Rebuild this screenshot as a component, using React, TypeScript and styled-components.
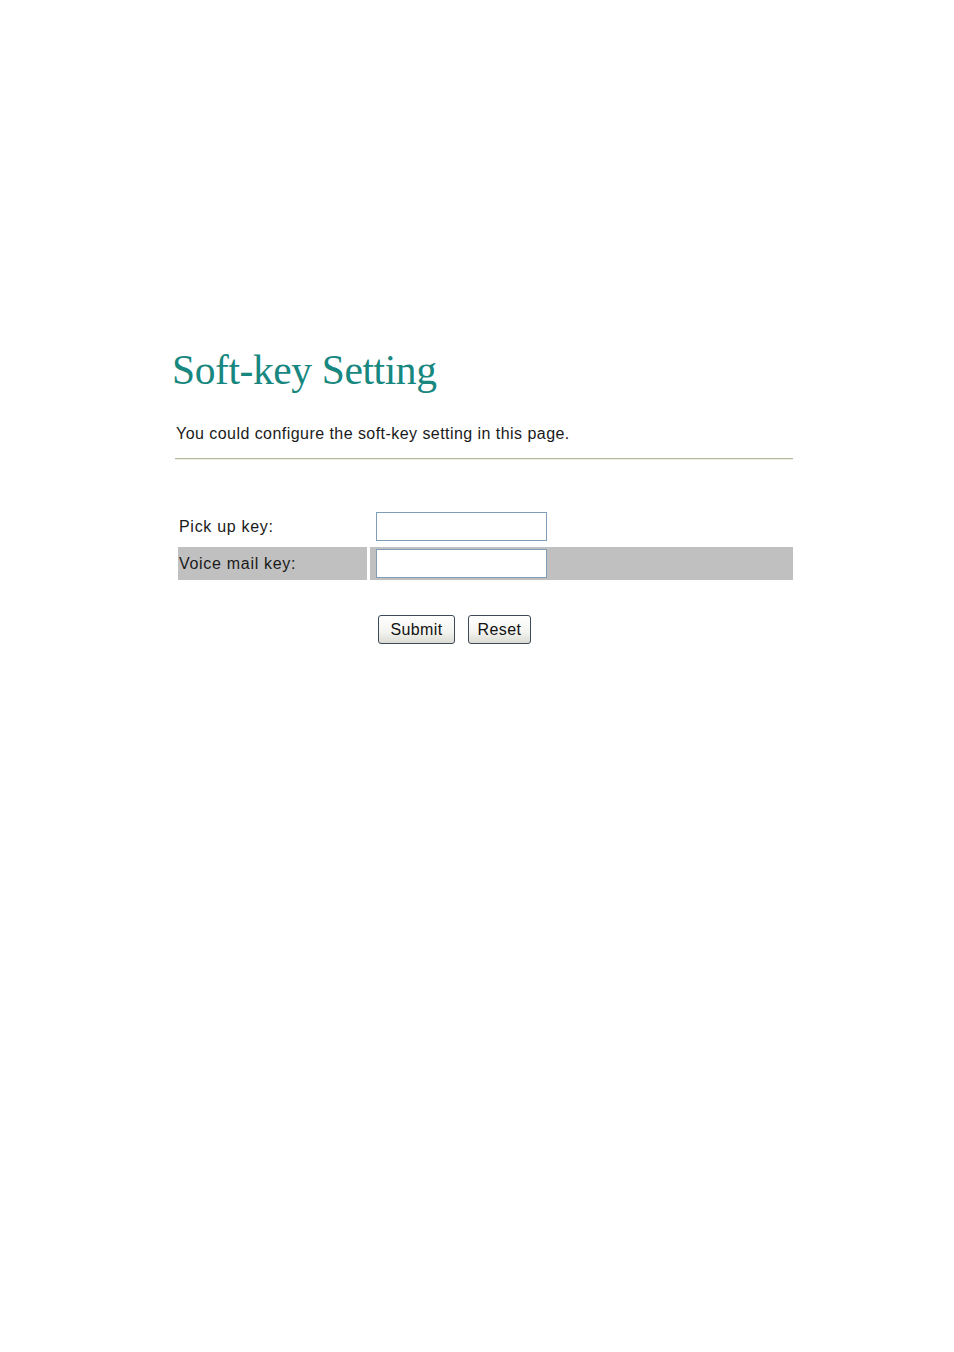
import React from 'react';
import styled, {createGlobalStyle} from 'styled-components';

const GlobalStyle = createGlobalStyle`
  html, body {
    margin: 0;
    padding: 0;
    background: #ffffff;
  }
  body {
    font-family: "Liberation Sans", Arial, sans-serif;
  }
`

const Page = styled.div`
  width: 954px;
  height: 1352px;
  padding: 342px 0 0 172px;
  box-sizing: border-box;
`

const Title = styled.h1`
  margin: 0;
  font-family: "Liberation Serif", "Times New Roman", serif;
  font-weight: normal;
  font-size: 41.5px;
  line-height: 56px;
  color: #17877f;
  letter-spacing: -0.4px;
`

const Intro = styled.p`
  margin: 25px 0 0 4px;
  font-size: 16px;
  line-height: 22px;
  letter-spacing: 0.45px;
  color: #1a1a1a;
`

const Rule = styled.hr`
  margin: 13px 0 0 3px;
  width: 618px;
  height: 0;
  border: none;
  border-top: 1px solid #b9b99c;
  box-shadow: 0 1px 0 #ecece2;
`

const Table = styled.div`
  margin: 51px 0 0 6px;
  width: 615px;
  display: flex;
  flex-direction: column;
  gap: 4px;
`

const Row = styled.div<{ $shaded?: boolean }>`
  display: grid;
  grid-template-columns: 189px 1fr;
  column-gap: 3px;
  height: 33px;

  & > div {
    background: ${(props) => props.$shaded ? '#c0c0c0' : 'transparent'};
  }
`

const Label = styled.div`
  display: flex;
  align-items: center;
  padding-left: 1px;
  font-size: 16px;
  letter-spacing: 0.7px;
  color: #1a1a1a;
`

const Field = styled.div`
  display: flex;
  align-items: center;
  padding-left: 6px;
`

const Input = styled.input`
  width: 171px;
  height: 29px;
  box-sizing: border-box;
  border: 1px solid #7f9db9;
  background: #ffffff;
  padding: 0 4px;
  margin: 0;
  font-size: 15px;
  font-family: "Liberation Sans", Arial, sans-serif;
  outline: none;
`

const Buttons = styled.div`
  display: flex;
  gap: 13px;
  margin: 35px 0 0 206px;
`

const Button = styled.button<{ $width: number }>`
  width: ${(props) => props.$width}px;
  height: 29px;
  padding: 0;
  box-sizing: border-box;
  border: 1px solid #3c4a5a;
  border-radius: 3px;
  background: linear-gradient(#ffffff 0%, #f3f3ef 60%, #dcdcd4 100%);
  font-family: "Liberation Sans", Arial, sans-serif;
  font-size: 16px;
  letter-spacing: 0.4px;
  color: #111111;
  cursor: pointer;
`

const App = () => {
    return (
        <>
            <GlobalStyle/>
            <Page>
                <Title>Soft-key Setting</Title>
                <Intro>You could configure the soft-key setting in this page.</Intro>
                <Rule/>
                <Table>
                    <Row>
                        <Label>Pick up key:</Label>
                        <Field><Input type="text"/></Field>
                    </Row>
                    <Row $shaded>
                        <Label>Voice mail key:</Label>
                        <Field><Input type="text"/></Field>
                    </Row>
                </Table>
                <Buttons>
                    <Button type="button" $width={77}>Submit</Button>
                    <Button type="reset" $width={63}>Reset</Button>
                </Buttons>
            </Page>
        </>
    );
};

export default App;
